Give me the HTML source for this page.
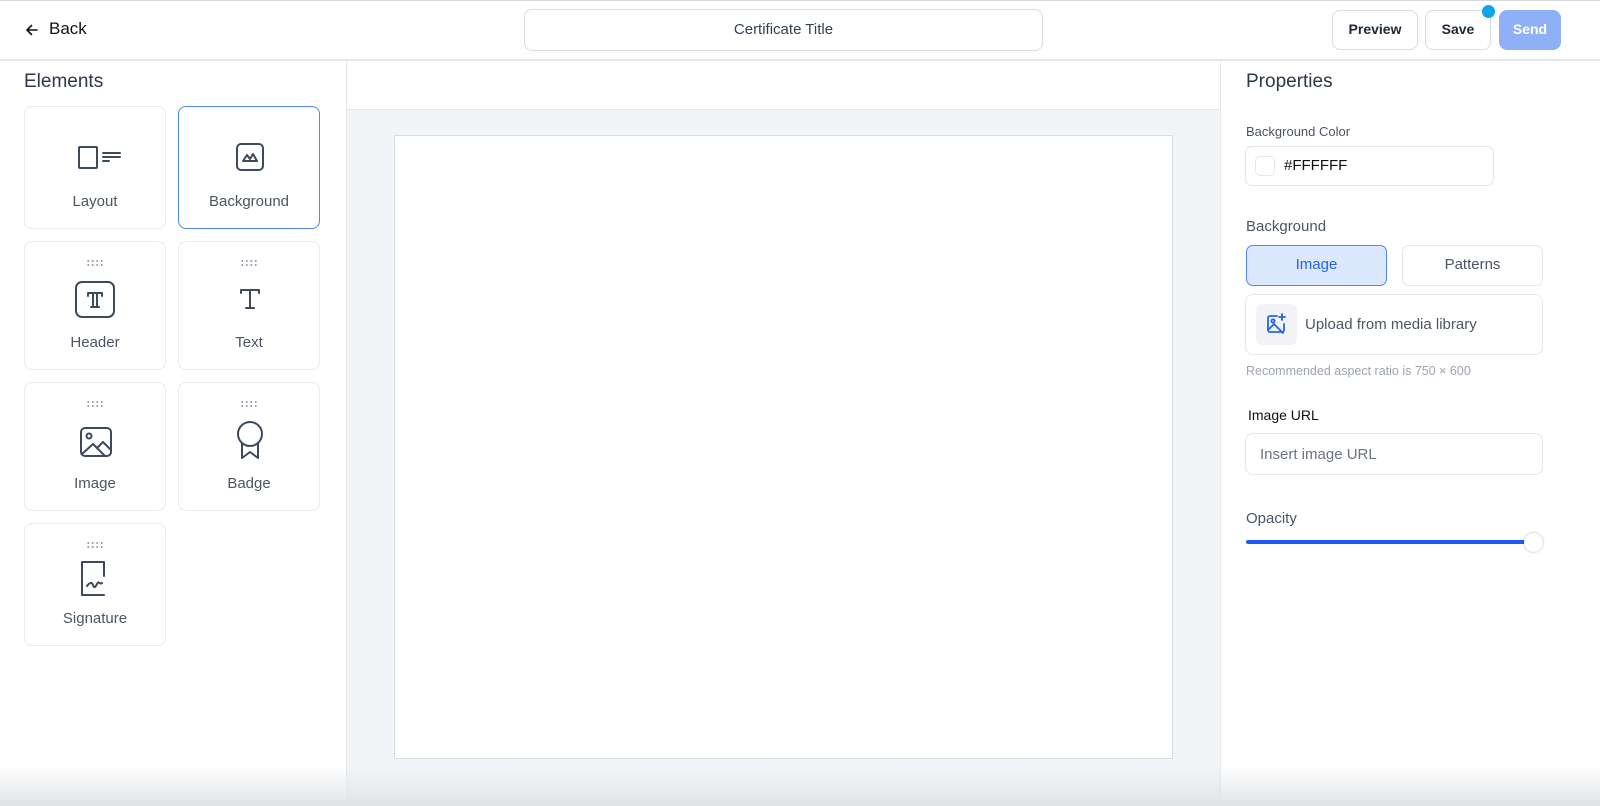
<!DOCTYPE html>
<html><head><style>
*{box-sizing:border-box;margin:0;padding:0}
body{width:1600px;height:806px;overflow:hidden;background:#fff;font-family:"Liberation Sans",sans-serif;position:relative;color:#334155}
.abs{position:absolute}
.card{position:absolute;width:142px;border:1.5px solid #e8eaee;border-radius:8px;background:#fff}
.card .lbl{position:absolute;left:0;right:0;text-align:center;font-size:15px;color:#4b5563}
.dots{position:absolute;left:61px;width:18px;height:8px;background-image:radial-gradient(circle,#94a3b8 0.9px,transparent 1.1px);background-size:4.5px 4px}
.btn{position:absolute;top:10px;height:40px;border:1.5px solid #d8dde4;border-radius:8px;background:#fff;font-size:14px;font-weight:bold;color:#1f2937;text-align:center;line-height:37px}
.ic{position:absolute;fill:none;stroke:#3d4a5c;stroke-width:2;stroke-linecap:round;stroke-linejoin:round}
</style></head><body>
<div class="abs" style="left:0;top:0;width:1600px;height:1px;background:#d7d9dc"></div>
<div class="abs" style="left:0;top:59px;width:1600px;height:1.5px;background:#e5e7eb"></div>
<svg class="abs" style="left:24px;top:22px" width="16" height="16" viewBox="0 0 16 16" fill="none" stroke="#111" stroke-width="1.6" stroke-linecap="round" stroke-linejoin="round"><path d="M13 8H3M7.5 3.5L3 8l4.5 4.5"/></svg>
<div class="abs" style="left:49px;top:19px;font-size:17px;color:#111">Back</div>
<div class="abs" style="left:524px;top:9px;width:519px;height:42px;border:1.5px solid #d8dde4;border-radius:8px;text-align:center;line-height:40px;font-size:15px;color:#334155">Certificate Title</div>
<div class="btn" style="left:1332px;width:86px">Preview</div>
<div class="btn" style="left:1425px;width:66px">Save</div>
<div class="abs" style="left:1482px;top:5px;width:13px;height:13px;border-radius:50%;background:#0ea5e9"></div>
<div class="btn" style="left:1499px;width:62px;background:#8fb0f7;border-color:#8fb0f7;color:#fff">Send</div>

<div class="abs" style="left:346px;top:60px;width:1px;height:740px;background:#e5e7eb"></div>
<div class="abs" style="left:24px;top:71px;font-size:19px;color:#2d3748">Elements</div>

<div class="card" style="left:24px;top:106px;height:123px"><div class="lbl" style="top:86px">Layout</div>
<svg class="ic" style="left:51px;top:38px" width="48" height="28" viewBox="0 0 48 28" stroke-width="1.8"><rect x="3" y="2" width="18" height="21" rx="1"/><path d="M27 8h17M27 12h17M27 16h6"/></svg></div>
<div class="card" style="left:178px;top:106px;height:123px;border-color:#4f86f7"><div class="lbl" style="top:86px">Background</div>
<svg class="ic" style="left:55px;top:34px" width="32" height="32" viewBox="0 0 32 32"><rect x="3" y="3" width="26" height="26" rx="4"/><path d="M9 20l4-6 3 4 3-5 4 7z"/></svg></div>

<div class="card" style="left:24px;top:241px;height:129px"><div class="dots" style="top:17px"></div><div class="lbl" style="top:92px">Header</div>
<svg class="ic" style="left:48px;top:37px" width="44" height="40" viewBox="0 0 44 40"><rect x="3" y="3" width="38" height="35" rx="6"/><path d="M15 14h14M15 14v3M29 14v3M20 14v14M24 14v14M18 28h8"/></svg></div>
<div class="card" style="left:178px;top:241px;height:129px"><div class="dots" style="top:17px"></div><div class="lbl" style="top:92px">Text</div>
<svg class="ic" style="left:55px;top:44px" width="32" height="28" viewBox="0 0 32 28"><path d="M7 4h18M7 4v3M25 4v3M16 4v18M12 22h8"/></svg></div>

<div class="card" style="left:24px;top:382px;height:129px"><div class="dots" style="top:17px"></div><div class="lbl" style="top:92px">Image</div>
<svg class="ic" style="left:53px;top:42px" width="36" height="34" viewBox="0 0 36 34"><rect x="3" y="3" width="30" height="28" rx="4"/><circle cx="11" cy="11" r="2.5"/><path d="M4 29l11-10 12 12M19 23l6-6 8 8"/></svg></div>
<div class="card" style="left:178px;top:382px;height:129px"><div class="dots" style="top:17px"></div><div class="lbl" style="top:92px">Badge</div>
<svg class="ic" style="left:55px;top:37px" width="32" height="42" viewBox="0 0 32 42"><circle cx="16" cy="14" r="12"/><path d="M8 24v14l8-6 8 6V24"/></svg></div>

<div class="card" style="left:24px;top:523px;height:123px"><div class="dots" style="top:17px"></div><div class="lbl" style="top:86px">Signature</div>
<svg class="ic" style="left:54px;top:35px" width="34" height="40" viewBox="0 0 34 40"><path d="M3 3h22v14M3 3v33h22"/><path d="M8 27c3-4 5-4 6-1s2 3 4-1 2 1 5-1"/></svg></div>

<div class="abs" style="left:347px;top:109px;width:873px;height:697px;background:#f1f5f8;border-top:1px solid #e5e7eb"></div>
<div class="abs" style="left:394px;top:135px;width:779px;height:624px;background:#fff;border:1px solid #dcdcdc"></div>

<div class="abs" style="left:1220px;top:60px;width:1px;height:740px;background:#e5e7eb"></div>
<div class="abs" style="left:1246px;top:71px;font-size:19px;color:#2d3748">Properties</div>
<div class="abs" style="left:1246px;top:124px;font-size:13px;color:#4b5563">Background Color</div>
<div class="abs" style="left:1245px;top:146px;width:249px;height:40px;border:1.5px solid #e5e7eb;border-radius:7px"></div>
<div class="abs" style="left:1255px;top:156px;width:20px;height:20px;border:1.5px solid #e5e7eb;border-radius:5px"></div>
<div class="abs" style="left:1284px;top:157px;font-size:15px;color:#111">#FFFFFF</div>
<div class="abs" style="left:1246px;top:218px;font-size:15px;color:#4b5563">Background</div>
<div class="abs" style="left:1246px;top:245px;width:141px;height:41px;border:1.5px solid #4f86f7;border-radius:7px;background:#dbe8fe;text-align:center;line-height:38px;font-size:15px;color:#2563eb">Image</div>
<div class="abs" style="left:1402px;top:245px;width:141px;height:41px;border:1.5px solid #e5e7eb;border-radius:7px;text-align:center;line-height:38px;font-size:15px;color:#4b5563">Patterns</div>
<div class="abs" style="left:1245px;top:294px;width:298px;height:61px;border:1.5px solid #e5e7eb;border-radius:8px"></div>
<div class="abs" style="left:1256px;top:304px;width:41px;height:41px;border-radius:6px;background:#f1f3f7"></div>
<svg class="abs" style="left:1265px;top:313px" width="22" height="22" viewBox="0 0 22 22" fill="none" stroke="#2563eb" stroke-width="1.8" stroke-linecap="round" stroke-linejoin="round"><path d="M12 3H5a2 2 0 0 0-2 2v12a2 2 0 0 0 2 2h12a2 2 0 0 0 2-2v-6"/><circle cx="8" cy="8" r="1.6"/><path d="M3 17l6-6 9 9M17 1v6M14 4h6"/></svg>
<div class="abs" style="left:1305px;top:316px;font-size:15px;color:#4b5563">Upload from media library</div>
<div class="abs" style="left:1246px;top:364px;font-size:12.5px;color:#9ca3af">Recommended aspect ratio is 750 × 600</div>
<div class="abs" style="left:1248px;top:407px;font-size:14px;color:#111">Image URL</div>
<div class="abs" style="left:1245px;top:433px;width:298px;height:42px;border:1.5px solid #e5e7eb;border-radius:8px"></div>
<div class="abs" style="left:1260px;top:446px;font-size:15px;color:#6b7280">Insert image URL</div>
<div class="abs" style="left:1246px;top:510px;font-size:15px;color:#4b5563">Opacity</div>
<div class="abs" style="left:1246px;top:540px;width:290px;height:4px;background:#1d5cf0;border-radius:2px"></div>
<div class="abs" style="left:1524px;top:533px;width:19px;height:19px;border-radius:50%;background:#fff;box-shadow:0 0 2px rgba(0,0,0,.35)"></div>

<div class="abs" style="left:0;top:765px;width:1600px;height:35px;background:linear-gradient(to bottom,rgba(230,232,234,0),rgba(225,228,231,.85))"></div>
<div class="abs" style="left:0;top:800px;width:1600px;height:6px;background:#e0e4e7"></div>
</body></html>
